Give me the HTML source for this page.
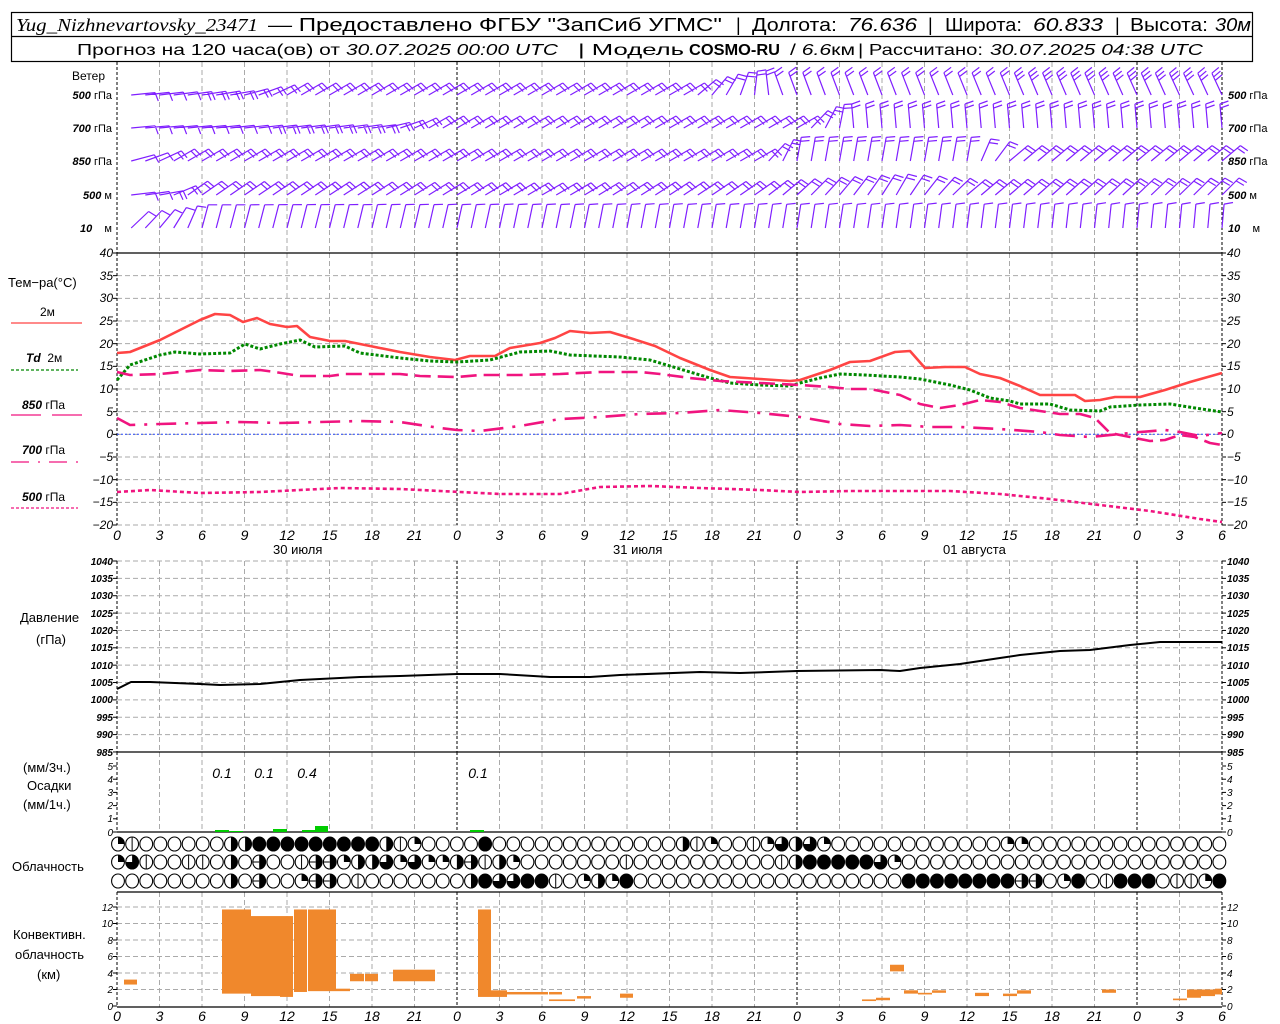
<!DOCTYPE html>
<html><head><meta charset="utf-8"><style>
html,body{margin:0;padding:0;background:#fff;}
svg{display:block}
.s{font-family:"Liberation Sans",sans-serif;}
.n{font-family:"Liberation Sans",sans-serif;font-style:italic;font-size:12px;}
</style></head><body>
<svg id="c" width="1280" height="1024" viewBox="0 0 1280 1024" xmlns="http://www.w3.org/2000/svg">
<rect width="1280" height="1024" fill="#fff"/>
<g id="g"></g>
<rect x="11.5" y="12.5" width="1241" height="49" fill="none" stroke="#000" stroke-width="1.2"/>
<line x1="11" y1="36.5" x2="1253" y2="36.5" stroke="#000" stroke-width="1.2"/>
<g class="s" font-size="18">
<text x="16" y="31" font-family="Liberation Serif,serif" font-style="italic" textLength="242" lengthAdjust="spacingAndGlyphs">Yug_Nizhnevartovsky_23471</text>
<text x="268" y="31" textLength="454" lengthAdjust="spacingAndGlyphs">— Предоставлено ФГБУ "ЗапСиб УГМС"</text>
<text x="736" y="31">|</text>
<text x="752" y="31" textLength="85" lengthAdjust="spacingAndGlyphs">Долгота:</text>
<text x="848" y="31" font-style="italic" textLength="69" lengthAdjust="spacingAndGlyphs">76.636</text>
<text x="928" y="31">|</text>
<text x="945" y="31" textLength="77" lengthAdjust="spacingAndGlyphs">Широта:</text>
<text x="1033" y="31" font-style="italic" textLength="70" lengthAdjust="spacingAndGlyphs">60.833</text>
<text x="1115" y="31">|</text>
<text x="1130" y="31" textLength="78" lengthAdjust="spacingAndGlyphs">Высота:</text>
<text x="1215" y="31" font-style="italic" textLength="36" lengthAdjust="spacingAndGlyphs">30м</text>
</g>
<g class="s" font-size="16">
<text x="77" y="55" textLength="263" lengthAdjust="spacingAndGlyphs">Прогноз на 120 часа(ов) от</text>
<text x="346" y="55" font-style="italic" textLength="212" lengthAdjust="spacingAndGlyphs">30.07.2025 00:00 UTC</text>
<text x="578" y="55" textLength="106" lengthAdjust="spacingAndGlyphs">| Модель</text>
<text x="689" y="55" font-weight="bold" textLength="91" lengthAdjust="spacingAndGlyphs">COSMO-RU</text>
<text x="790" y="55" textLength="65" lengthAdjust="spacingAndGlyphs">/ <tspan font-style="italic">6.6</tspan>км</text>
<text x="858" y="55" textLength="125" lengthAdjust="spacingAndGlyphs">| Рассчитано:</text>
<text x="990" y="55" font-style="italic" textLength="213" lengthAdjust="spacingAndGlyphs">30.07.2025 04:38 UTC</text>
</g>
<g class="s" font-size="11">
<text x="72" y="80" font-size="12">Ветер</text>
<text x="112" y="99" text-anchor="end"><tspan font-style="italic" font-weight="bold">500</tspan> гПа</text>
<text x="112" y="132" text-anchor="end"><tspan font-style="italic" font-weight="bold">700</tspan> гПа</text>
<text x="112" y="165" text-anchor="end"><tspan font-style="italic" font-weight="bold">850</tspan> гПа</text>
<text x="112" y="199" text-anchor="end"><tspan font-style="italic" font-weight="bold">500</tspan> м</text>
<text x="112" y="232" text-anchor="end"><tspan font-style="italic" font-weight="bold">10</tspan>&#160;&#160;&#160;&#160;м</text>
<text x="1228" y="99"><tspan font-style="italic" font-weight="bold">500</tspan> гПа</text>
<text x="1228" y="132"><tspan font-style="italic" font-weight="bold">700</tspan> гПа</text>
<text x="1228" y="165"><tspan font-style="italic" font-weight="bold">850</tspan> гПа</text>
<text x="1228" y="199"><tspan font-style="italic" font-weight="bold">500</tspan> м</text>
<text x="1228" y="232"><tspan font-style="italic" font-weight="bold">10</tspan>&#160;&#160;&#160;&#160;м</text>
</g>
<g class="s" font-size="13">
<text x="8" y="287">Тем−ра(°C)</text>
<text x="40" y="316" font-size="12">2м</text>
<text x="26" y="362" font-size="12"><tspan font-style="italic" font-weight="bold">Td</tspan>&#160;&#160;2м</text>
<text x="22" y="409" font-size="12"><tspan font-style="italic" font-weight="bold">850</tspan> гПа</text>
<text x="22" y="454" font-size="12"><tspan font-style="italic" font-weight="bold">700</tspan> гПа</text>
<text x="22" y="501" font-size="12"><tspan font-style="italic" font-weight="bold">500</tspan> гПа</text>
<text x="20" y="622">Давление</text>
<text x="36" y="644">(гПа)</text>
<text x="23" y="772">(мм/3ч.)</text>
<text x="27" y="790">Осадки</text>
<text x="23" y="809">(мм/1ч.)</text>
<text x="12" y="871">Облачность</text>
<text x="13" y="939">Конвективн.</text>
<text x="15" y="959">облачность</text>
<text x="37" y="979">(км)</text>
<text x="273" y="554">30 июля</text>
<text x="613" y="554">31 июля</text>
<text x="943" y="554">01 августа</text>
</g>
<line x1="11" y1="323" x2="82" y2="323" stroke="#f44" stroke-width="1.2"/>
<line x1="11" y1="370" x2="78" y2="370" stroke="#080" stroke-width="1.2" stroke-dasharray="3,2"/>
<line x1="11" y1="415" x2="41" y2="415" stroke="#f0147f" stroke-width="1.2"/>
<line x1="52" y1="415" x2="82" y2="415" stroke="#f0147f" stroke-width="1.2"/>
<line x1="11" y1="462" x2="82" y2="462" stroke="#f0147f" stroke-width="1.2" stroke-dasharray="18,9,2,9"/>
<line x1="11" y1="508" x2="78" y2="508" stroke="#f0147f" stroke-width="1.2" stroke-dasharray="3,2"/>
<g class="n">
<text x="113" y="257" text-anchor="end">40</text><text x="113" y="280" text-anchor="end">35</text><text x="113" y="302" text-anchor="end">30</text><text x="113" y="325" text-anchor="end">25</text><text x="113" y="348" text-anchor="end">20</text><text x="113" y="370" text-anchor="end">15</text><text x="113" y="393" text-anchor="end">10</text><text x="113" y="416" text-anchor="end">5</text><text x="113" y="438" text-anchor="end">0</text><text x="113" y="461" text-anchor="end">−5</text><text x="113" y="484" text-anchor="end">−10</text><text x="113" y="506" text-anchor="end">−15</text><text x="113" y="529" text-anchor="end">−20</text>
<text x="1227" y="257">40</text><text x="1227" y="280">35</text><text x="1227" y="302">30</text><text x="1227" y="325">25</text><text x="1227" y="348">20</text><text x="1227" y="370">15</text><text x="1227" y="393">10</text><text x="1227" y="416">5</text><text x="1227" y="438">0</text><text x="1227" y="461">−5</text><text x="1227" y="484">−10</text><text x="1227" y="506">−15</text><text x="1227" y="529">−20</text>
<g font-size="10" font-weight="bold">
<text x="113" y="565" text-anchor="end">1040</text><text x="113" y="582" text-anchor="end">1035</text><text x="113" y="599" text-anchor="end">1030</text><text x="113" y="617" text-anchor="end">1025</text><text x="113" y="634" text-anchor="end">1020</text><text x="113" y="651" text-anchor="end">1015</text><text x="113" y="669" text-anchor="end">1010</text><text x="113" y="686" text-anchor="end">1005</text><text x="113" y="703" text-anchor="end">1000</text><text x="113" y="721" text-anchor="end">995</text><text x="113" y="738" text-anchor="end">990</text><text x="113" y="756" text-anchor="end">985</text>
<text x="1227" y="565">1040</text><text x="1227" y="582">1035</text><text x="1227" y="599">1030</text><text x="1227" y="617">1025</text><text x="1227" y="634">1020</text><text x="1227" y="651">1015</text><text x="1227" y="669">1010</text><text x="1227" y="686">1005</text><text x="1227" y="703">1000</text><text x="1227" y="721">995</text><text x="1227" y="738">990</text><text x="1227" y="756">985</text>
</g>
<g font-size="10">
<text x="113" y="770" text-anchor="end">5</text><text x="113" y="783" text-anchor="end">4</text><text x="113" y="796" text-anchor="end">3</text><text x="113" y="809" text-anchor="end">2</text><text x="113" y="822" text-anchor="end">1</text><text x="113" y="836" text-anchor="end">0</text>
<text x="1227" y="770">5</text><text x="1227" y="783">4</text><text x="1227" y="796">3</text><text x="1227" y="809">2</text><text x="1227" y="822">1</text><text x="1227" y="836">0</text>
<text x="113" y="911" text-anchor="end">12</text><text x="113" y="927" text-anchor="end">10</text><text x="113" y="944" text-anchor="end">8</text><text x="113" y="960" text-anchor="end">6</text><text x="113" y="977" text-anchor="end">4</text><text x="113" y="993" text-anchor="end">2</text><text x="113" y="1010" text-anchor="end">0</text>
<text x="1227" y="911">12</text><text x="1227" y="927">10</text><text x="1227" y="944">8</text><text x="1227" y="960">6</text><text x="1227" y="977">4</text><text x="1227" y="993">2</text><text x="1227" y="1010">0</text>
</g>
<g font-size="14">
<text x="222" y="778" text-anchor="middle">0.1</text><text x="264" y="778" text-anchor="middle">0.1</text><text x="307" y="778" text-anchor="middle">0.4</text><text x="478" y="778" text-anchor="middle">0.1</text>
</g>
<g font-size="14" text-anchor="middle">
<text x="117" y="540">0</text><text x="159.5" y="540">3</text><text x="202" y="540">6</text><text x="244.5" y="540">9</text><text x="287" y="540">12</text><text x="329.5" y="540">15</text><text x="372" y="540">18</text><text x="414.5" y="540">21</text><text x="457" y="540">0</text><text x="499.5" y="540">3</text><text x="542" y="540">6</text><text x="584.5" y="540">9</text><text x="627" y="540">12</text><text x="669.5" y="540">15</text><text x="712" y="540">18</text><text x="754.5" y="540">21</text><text x="797" y="540">0</text><text x="839.5" y="540">3</text><text x="882" y="540">6</text><text x="924.5" y="540">9</text><text x="967" y="540">12</text><text x="1009.5" y="540">15</text><text x="1052" y="540">18</text><text x="1094.5" y="540">21</text><text x="1137" y="540">0</text><text x="1179.5" y="540">3</text><text x="1222" y="540">6</text>
<text x="117" y="1021">0</text><text x="159.5" y="1021">3</text><text x="202" y="1021">6</text><text x="244.5" y="1021">9</text><text x="287" y="1021">12</text><text x="329.5" y="1021">15</text><text x="372" y="1021">18</text><text x="414.5" y="1021">21</text><text x="457" y="1021">0</text><text x="499.5" y="1021">3</text><text x="542" y="1021">6</text><text x="584.5" y="1021">9</text><text x="627" y="1021">12</text><text x="669.5" y="1021">15</text><text x="712" y="1021">18</text><text x="754.5" y="1021">21</text><text x="797" y="1021">0</text><text x="839.5" y="1021">3</text><text x="882" y="1021">6</text><text x="924.5" y="1021">9</text><text x="967" y="1021">12</text><text x="1009.5" y="1021">15</text><text x="1052" y="1021">18</text><text x="1094.5" y="1021">21</text><text x="1137" y="1021">0</text><text x="1179.5" y="1021">3</text><text x="1222" y="1021">6</text>
</g>
</g>
</svg>
<script>
(function(){
var NS="http://www.w3.org/2000/svg",G=document.getElementById("g");
function el(t,a){var e=document.createElementNS(NS,t);for(var k in a)e.setAttribute(k,a[k]);G.appendChild(e);return e;}
function X(h){return 117+h*14.1667;}
function hg(y){el("line",{x1:117,y1:y,x2:1222,y2:y,stroke:"#aaa","stroke-dasharray":"5,3"});}
for(var k=1;k<13;k++)hg(253+k*22.667);
for(var k=0;k<11;k++)hg(561+k*17.36);
for(var k=1;k<7;k++)hg(1006-k*16.5);
function tk(y){el("line",{x1:113,y1:y,x2:117,y2:y,stroke:"#000"});el("line",{x1:1222,y1:y,x2:1226,y2:y,stroke:"#000"});}
for(var k=0;k<13;k++)tk(253+k*22.667);
for(var k=0;k<12;k++)tk(561+k*17.36);
for(var k=0;k<6;k++)tk(832-k*13.2);
for(var k=0;k<7;k++)tk(1006-k*16.5);
function vg(y1,y2){for(var n=0;n<=26;n++){var x=117+42.5*n,d=(n%8==0||n==26);
el("line",{x1:x,y1:y1,x2:x,y2:y2,stroke:d?"#000":"#aaa","stroke-dasharray":d?"3,2":"5,3"});}}
vg(62,253);vg(253,525);vg(561,752);vg(752,832);vg(892,1007);
[[253],[752],[832],[892],[1007]].forEach(function(a){el("line",{x1:117,y1:a[0],x2:1222,y2:a[0],stroke:"#000","stroke-width":1.3});});
el("line",{x1:117,y1:434.3,x2:1222,y2:434.3,stroke:"#3050ff","stroke-dasharray":"2,2"});
function pl(p,c,w,d){el("polyline",{points:p,fill:"none",stroke:c,"stroke-width":w,"stroke-dasharray":d||"none","stroke-linejoin":"round"});}
pl("117,353 130,352 160,340 200,320 215,314 230,315 243,322 257,318 270,324 287,327 297,326 310,337 330,341 345,341 370,346 400,352 430,357 455,360 470,356 495,356 510,348 540,343 555,338 570,331 590,333 610,332 630,338 655,346 680,358 710,370 730,377 760,379 790,381 800,380 830,370 850,362 870,361 895,352 910,351 925,368 945,367 965,367 980,374 1000,378 1020,386 1040,395 1075,395 1085,401 1100,400 1115,397 1140,397 1165,390 1190,382 1222,373","#f44",2.6);
pl("117,380 130,365 160,355 175,352 200,354 230,353 245,344 260,349 280,344 300,340 315,347 345,346 360,353 400,358 430,361 457,362 490,360 520,352 550,351 570,355 620,357 650,360 680,369 710,378 730,383 760,385 790,386 800,383 820,378 840,374 865,375 900,377 920,379 950,385 970,390 990,398 1010,401 1020,404 1050,404 1070,410 1100,411 1110,407 1140,405 1170,404 1195,408 1222,412","#080",3,"3,2");
pl("117,372 130,375 160,374 200,370 230,371 260,370 275,372 300,376 330,376 345,374 380,374 400,374 420,376 457,377 480,375 520,375 560,374 600,372 640,372 660,374 690,378 720,381 760,383 800,385 830,387 850,389 870,389 900,395 920,404 940,408 960,405 980,400 1000,402 1020,408 1040,411 1060,414 1080,414 1095,418 1110,433 1130,437 1150,441 1165,440 1180,435 1195,437 1210,443 1222,445","#f0147f",2.6,"16,7");
pl("117,418 130,425 160,424 200,423 240,422 280,423 320,422 360,421 400,422 440,428 457,430 480,431 520,426 560,419 600,417 640,414 680,413 720,410 760,413 800,417 840,424 870,426 900,425 930,427 960,427 1000,429 1040,432 1060,435 1090,437 1120,434 1140,432 1165,430 1180,432 1200,436 1222,433","#f0147f",2.6,"20,9,3,9");
pl("117,492 150,490 200,493 260,492 300,490 340,488 400,489 460,492 500,494 560,494 600,487 650,486 700,488 760,490 800,492 850,491 900,491 950,491 1000,494 1050,499 1100,505 1150,511 1200,519 1222,522","#f0147f",2.6,"4,3");
pl("117,689 131,682 150,682 200,684 220,685 260,684 280,682 300,680 320,679 360,677 400,676 457,674 500,674 550,677 590,677 620,675 700,672 740,673 797,671 880,670 900,671 920,668 960,664 1000,658 1020,655 1060,651 1090,650 1130,645 1160,642 1222,642","#000",2);
[[215,229,2],[230,243,1],[273,287,3],[302,315,2],[315,328,6],[470,484,2]].forEach(function(b){el("rect",{x:b[0],y:832-b[2],width:b[1]-b[0],height:b[2],fill:"#00cc00"});});
function K(v){return 1006-8.25*v;}
[[124,137,2.6,3.2],[222,251,1.5,11.7],[251,280,1.2,10.9],[280,293,1.1,10.9],[294,307,1.7,11.7],[308,336,1.8,11.7],[336,350,1.8,2.1],[350,364,3,3.9],[365,378,3,3.9],[393,435,3,4.4],[478,491,1.1,11.7],[491,507,1.1,1.9],[507,548,1.4,1.7],[549,562,1.4,1.7],[549,575,0.6,0.8],[577,591,0.9,1.2],[620,633,1,1.5],[862,876,0.6,0.8],[876,890,0.7,1],[890,904,4.2,5],[904,918,1.5,1.9],[918,932,1.4,1.6],[932,946,1.6,1.9],[975,989,1.2,1.6],[1003,1017,1.2,1.5],[1017,1031,1.5,1.9],[1102,1116,1.6,2],[1173,1187,0.7,0.9],[1187,1201,1,2],[1201,1215,1.2,2],[1215,1222,1.4,2.1]].forEach(function(b){el("rect",{x:b[0],y:K(b[3]),width:b[1]-b[0],height:K(b[2])-K(b[3]),fill:"#f0882c"});});
function rep(c,n){return new Array(n+1).join(c);}
var rows=[
"QV"+rep("O",6)+"HH"+rep("F",9)+"HVQ"+rep("O",4)+"F"+rep("O",13)+"HVQOOVQTHTQ"+rep("O",12)+"QQ"+rep("O",14),
"QTVOOVVOHOEOOVEEQHHTQTQQHEVHQ"+rep("O",7)+"V"+rep("O",10)+"VH"+"FFFFF"+"TQ"+rep("O",23),
"OOOOOOOOHOEOOQEEOV"+rep("O",7)+"HFTTFFVOQHQF"+rep("O",19)+"FFFFFFFF"+"EEOQFOVFFF"+"OVVQF"];
var ys=[844,862,881];
rows.forEach(function(s,r){var cy=ys[r];for(var i=0;i<79;i++){var cx=118+14.12*i,t=s[i]||"O",rx=6.4,ry=7;
el("ellipse",{cx:cx,cy:cy,rx:rx,ry:ry,fill:t=="F"?"#000":"#fff",stroke:"#000","stroke-width":1.1});
if(t=="V")el("line",{x1:cx,y1:cy-ry,x2:cx,y2:cy+ry,stroke:"#000"});
if(t=="Q")el("path",{d:"M"+cx+","+cy+"L"+cx+","+(cy-ry)+"A"+rx+","+ry+" 0 0 1 "+(cx+rx)+","+cy+"Z",fill:"#000"});
if(t=="H"||t=="E")el("path",{d:"M"+cx+","+(cy-ry)+"A"+rx+","+ry+" 0 0 1 "+cx+","+(cy+ry)+"Z",fill:"#000"});
if(t=="E")el("line",{x1:cx-rx,y1:cy,x2:cx,y2:cy,stroke:"#000"});
if(t=="T")el("path",{d:"M"+cx+","+cy+"L"+cx+","+(cy-ry)+"A"+rx+","+ry+" 0 1 1 "+(cx-rx)+","+cy+"Z",fill:"#000"});
}});
function interp(bp,h){for(var i=0;i<bp.length-1;i++){if(h<=bp[i+1][0]){var a=bp[i],b=bp[i+1],f=(h-a[0])/(b[0]-a[0]);return a[1]+f*(b[1]-a[1]);}}return bp[bp.length-1][1];}
var W=[
{y:95,a:[[0,5],[8,10],[12,30],[40,30],[44,70],[47,110],[78,115]],n:[[0,1],[10,2],[50,2],[78,3]]},
{y:128,a:[[0,5],[18,8],[22,30],[48,30],[52,95],[78,95]],n:[[0,1],[20,2],[78,2]]},
{y:161,a:[[0,10],[4,30],[45,30],[48,80],[60,80],[63,40],[78,40]],n:[[0,1],[5,2],[78,2]]},
{y:195,a:[[0,5],[3,10],[5,35],[30,30],[45,35],[55,60],[60,40],[78,45]],n:[[0,1],[5,2],[78,2]]},
{y:228,a:[[0,40],[3,50],[6,75],[78,85]],n:[[0,1],[78,1]]}];
var g2=document.createElementNS(NS,"path"),d="";
W.forEach(function(w){for(var h=1;h<79;h++){var x=X(h),yb=w.y,ph=interp(w.a,h)*Math.PI/180,L=24,
tx=x+L*Math.cos(ph),ty=yb-L*Math.sin(ph),n=Math.round(interp(w.n,h)),fd=ph-75*Math.PI/180;
d+="M"+x.toFixed(1)+","+yb+"L"+tx.toFixed(1)+","+ty.toFixed(1);
for(var k=0;k<n;k++){var px=tx-k*4*Math.cos(ph),py=ty+k*4*Math.sin(ph);
d+="M"+px.toFixed(1)+","+py.toFixed(1)+"l"+(9*Math.cos(fd)).toFixed(1)+","+(-9*Math.sin(fd)).toFixed(1);}}});
g2.setAttribute("d",d);g2.setAttribute("stroke","#7f1fff");g2.setAttribute("stroke-width","1.2");g2.setAttribute("fill","none");G.appendChild(g2);
})();
</script>
</body></html>
